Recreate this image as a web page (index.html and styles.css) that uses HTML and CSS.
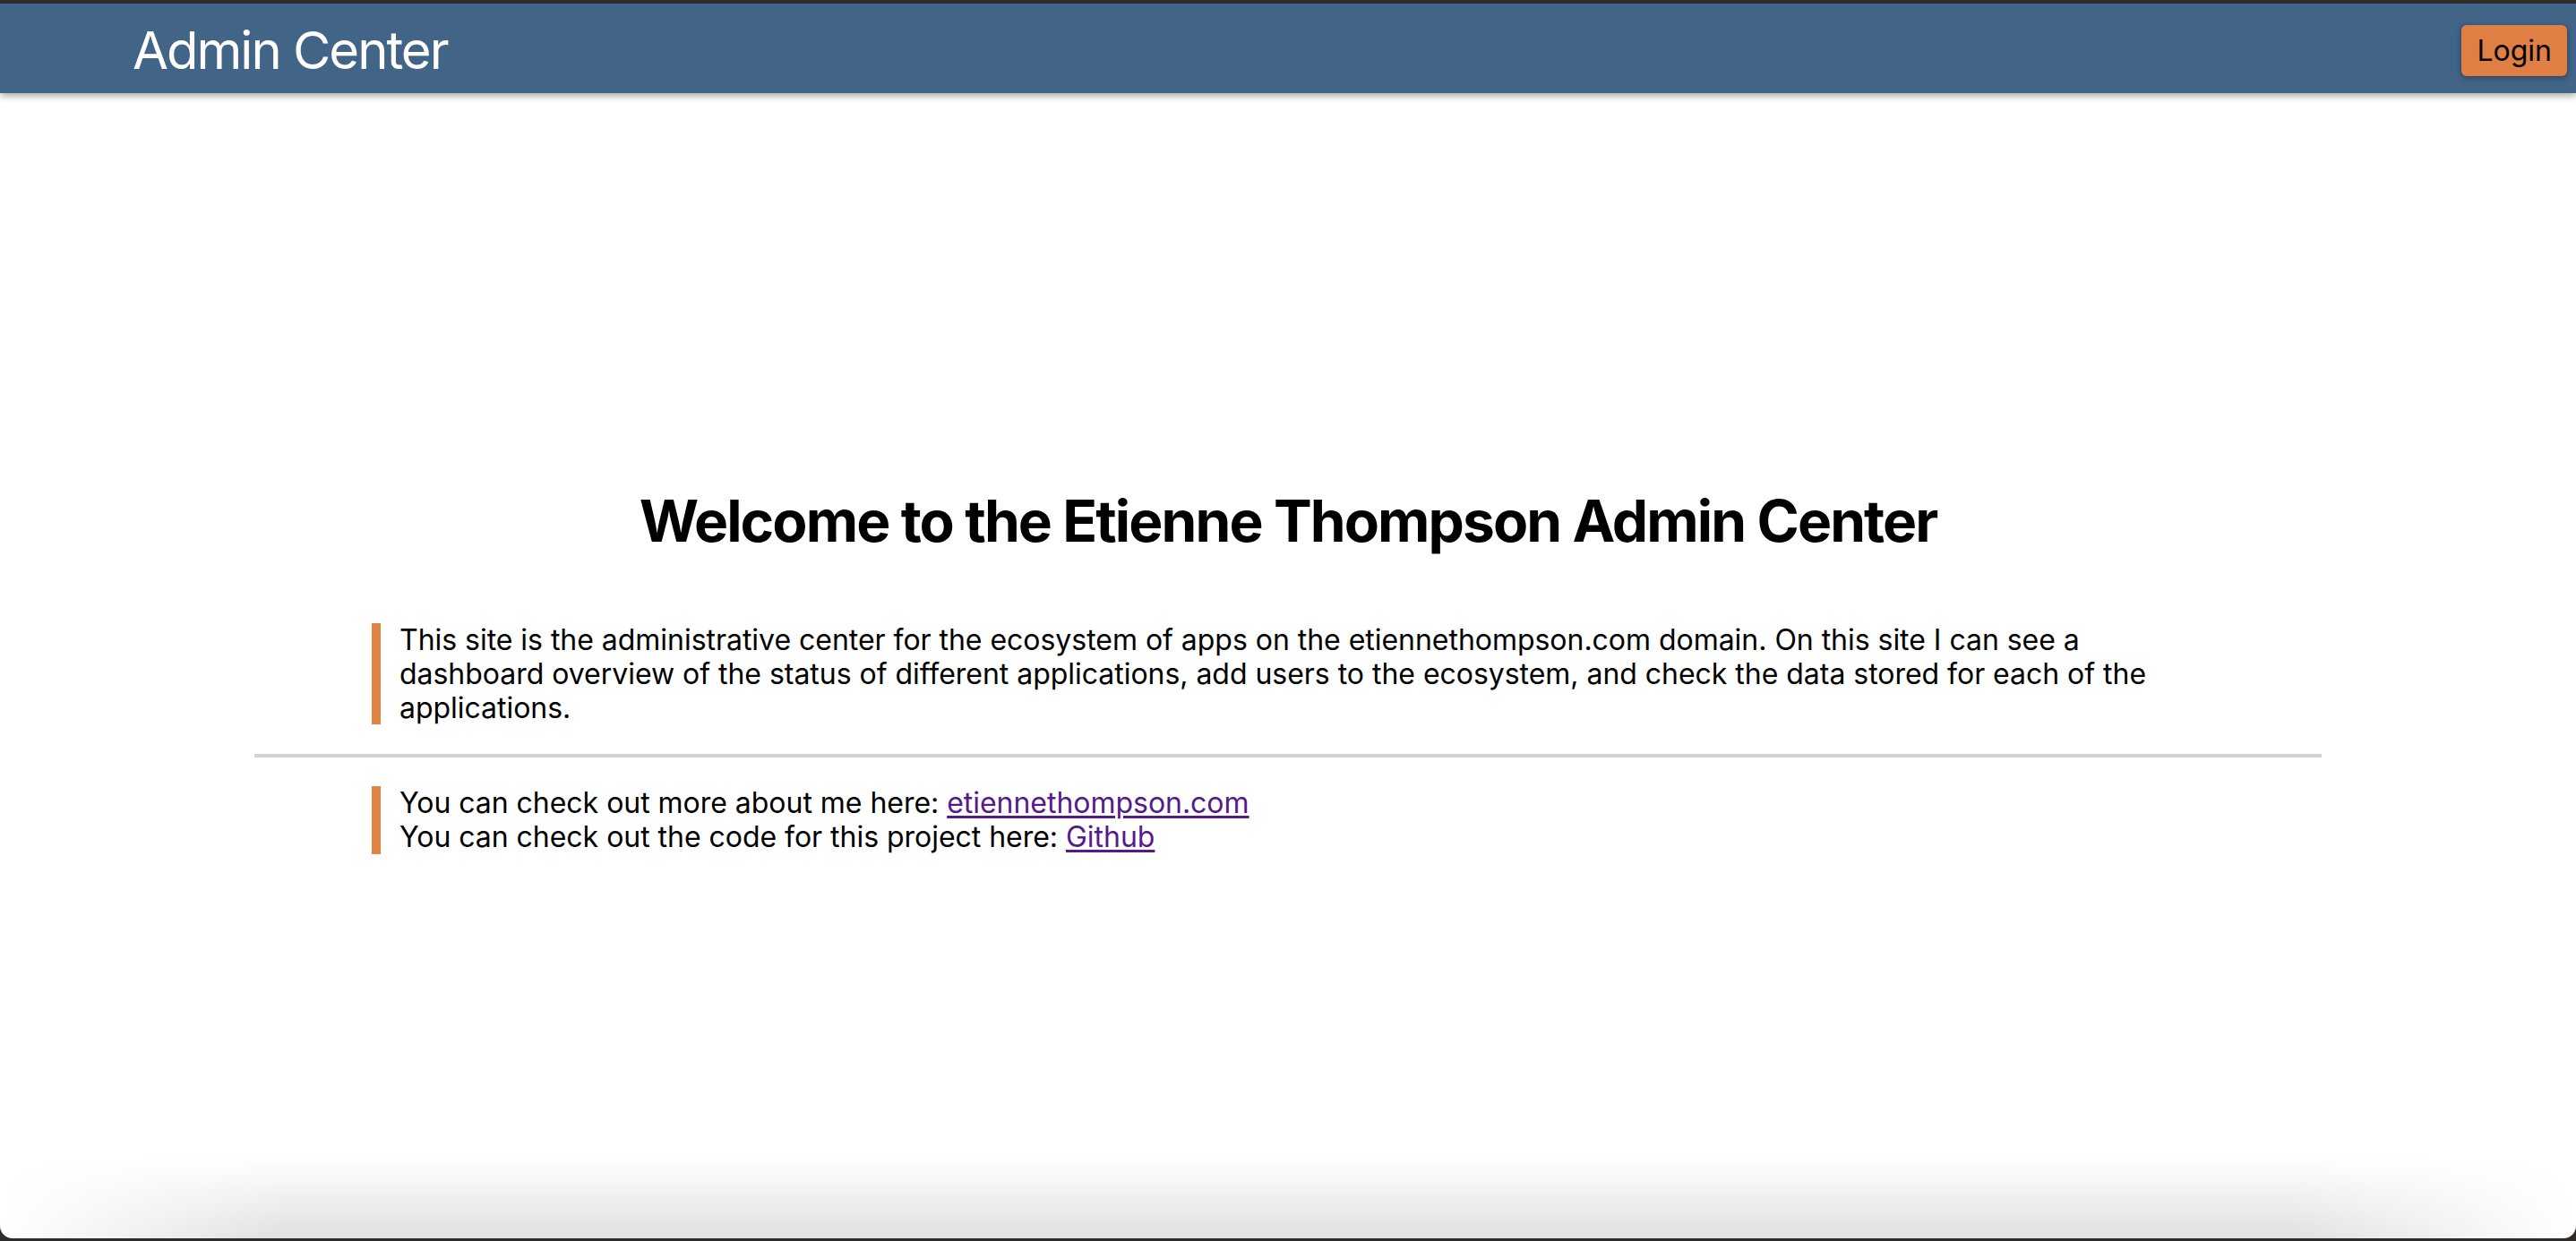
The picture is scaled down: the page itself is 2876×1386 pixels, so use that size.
FILE: index.html
```html
<!DOCTYPE html>
<html lang="en">
<head>
<meta charset="utf-8">
<title>Admin Center</title>
<link rel="stylesheet" href="styles.css">
</head>
<body>
<div class="window">
  <header class="topbar">
    <div class="brand">Admin Center</div>
    <button class="login-btn" type="button">Login</button>
  </header>
  <main class="main">
    <div class="content">
      <h1 class="title">Welcome to the Etienne Thompson Admin Center</h1>
      <p class="note">This site is the administrative center for the ecosystem of apps on the etiennethompson.com domain. On this site I can see a dashboard overview of the status of different applications, add users to the ecosystem, and check the data stored for each of the applications.</p>
      <hr class="divider">
      <p class="note">You can check out more about me here: <a class="link" href="#">etiennethompson.com</a><br>You can check out the code for this project here: <a class="link" href="#">Github</a></p>
    </div>
  </main>
  <div class="bottom-shade"></div>
</div>
</body>
</html>
```

FILE: styles.css
```css
html, body {
  margin: 0;
  padding: 0;
  height: 100%;
}

body {
  background: #2f2c29;
  font-family: Inter, "Liberation Sans", sans-serif;
  overflow: hidden;
}

.window {
  position: relative;
  display: flex;
  flex-direction: column;
  height: calc(100vh - 7px);
  margin-top: 4px;
  background: #ffffff;
  border-radius: 0 0 14px 14px;
  overflow: hidden;
}

.topbar {
  flex: 0 0 100px;
  display: flex;
  align-items: center;
  justify-content: space-between;
  background: #416487;
  padding: 0 10px 0 148px;
  box-shadow: 0 3px 8px rgba(0, 0, 0, 0.35);
  position: relative;
  z-index: 2;
}

.brand {
  color: #ffffff;
  font-size: 58px;
  font-weight: 400;
  letter-spacing: -2px;
  margin-top: 4px;
}

.login-btn {
  font-family: Inter, "Liberation Sans", sans-serif;
  font-size: 32px;
  color: #000;
  background: #e07f43;
  border: none;
  border-radius: 6px;
  height: 57px;
  padding: 0 17px;
  margin-top: 5px;
  box-shadow: 0 2px 6px rgba(0, 0, 0, 0.35);
}

.main {
  flex: 1;
  display: flex;
  flex-direction: column;
  justify-content: center;
}

.content {
  display: flex;
  flex-direction: column;
  margin: 0 284px;
}

.title {
  margin: 43px 0 75px;
  font-size: 64px;
  line-height: 76.8px;
  font-weight: 700;
  text-align: center;
  color: #000;
  letter-spacing: -1.9px;
}

.note {
  margin: 0 131px;
  border-left: 10px solid #e08243;
  padding-left: 21px;
  font-size: 32px;
  line-height: 37.7px;
  color: #000;
  letter-spacing: -0.03px;
}

.note:last-child {
  margin-bottom: 32px;
}

.divider {
  border: none;
  height: 4px;
  background: #d3d3d3;
  margin: 33px 0 32px;
}

.link {
  color: #551a8b;
  text-decoration: underline;
  text-underline-offset: 3px;
}

.bottom-shade {
  position: absolute;
  left: 0;
  right: 0;
  bottom: 0;
  height: 90px;
  pointer-events: none;
  background: linear-gradient(to bottom, rgba(0, 0, 0, 0), rgba(0, 0, 0, 0.12));
  -webkit-mask-image: linear-gradient(to right, transparent, #000 320px, #000 calc(100% - 320px), transparent);
  mask-image: linear-gradient(to right, transparent, #000 320px, #000 calc(100% - 320px), transparent);
}
```
